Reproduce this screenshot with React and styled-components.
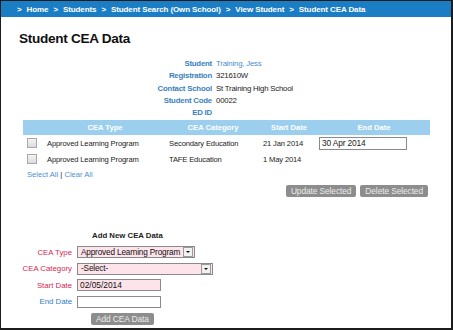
import React from "react";
import styled, { createGlobalStyle } from "styled-components";

const GlobalStyle = createGlobalStyle`
  html, body {
    margin: 0;
    padding: 0;
    background: #fff;
  }
  body {
    font-family: "Liberation Sans", Arial, sans-serif;
  }
`;

const crumbs = [
  "Home",
  "Students",
  "Student Search (Own School)",
  "View Student",
  "Student CEA Data",
];

const info = [
  { label: "Student", value: "Training, Jess", link: true },
  { label: "Registration", value: "321610W" },
  { label: "Contact School", value: "St Training High School" },
  { label: "Student Code", value: "00022" },
  { label: "ED ID", value: "" },
];

const rows = [
  {
    type: "Approved Learning Program",
    category: "Secondary Education",
    start: "21 Jan 2014",
    end: "30 Apr 2014",
  },
  {
    type: "Approved Learning Program",
    category: "TAFE Education",
    start: "1 May 2014",
  },
];

function App() {
  return (
    <>
      <GlobalStyle />
      <Frame>
        <Crumbs>
          {crumbs.map((c) => (
            <Crumb key={c}>
              <Gt>&gt;</Gt>
              {c}
            </Crumb>
          ))}
        </Crumbs>

        <Title>Student CEA Data</Title>

        <Info>
          {info.map((i) => (
            <React.Fragment key={i.label}>
              <InfoLabel>{i.label}</InfoLabel>
              <InfoValue $link={i.link}>{i.value}</InfoValue>
            </React.Fragment>
          ))}
        </Info>

        <Table>
          <Head />
          <Head>CEA Type</Head>
          <Head>CEA Category</Head>
          <Head>Start Date</Head>
          <Head>End Date</Head>
          {rows.map((r, idx) => (
            <React.Fragment key={idx}>
              <Cell>
                <Check />
              </Cell>
              <Cell>{r.type}</Cell>
              <Cell>{r.category}</Cell>
              <Cell>{r.start}</Cell>
              <Cell>{r.end && <DateBox>{r.end}</DateBox>}</Cell>
            </React.Fragment>
          ))}
        </Table>

        <SelectLinks>
          <Link>Select All</Link> | <Link>Clear All</Link>
        </SelectLinks>

        <Actions>
          <GreyButton>Update Selected</GreyButton>
          <GreyButton>Delete Selected</GreyButton>
        </Actions>

        <AddHeading>Add New CEA Data</AddHeading>

        <Form>
          <FormLabel $required>CEA Type</FormLabel>
          <Select $width={118}>
            <span>Approved Learning Program</span>
            <Arrow />
          </Select>

          <FormLabel $required>CEA Category</FormLabel>
          <Select $width={136}>
            <span>-Select-</span>
            <Arrow />
          </Select>

          <FormLabel $required>Start Date</FormLabel>
          <TextBox $pink>02/05/2014</TextBox>

          <FormLabel>End Date</FormLabel>
          <TextBox />
        </Form>

        <AddButton>Add CEA Data</AddButton>
      </Frame>
    </>
  );
}

export default App;

const Frame = styled.div`
  width: 453px;
  height: 330px;
  box-sizing: border-box;
  border: 1px solid #1c1c1c;
  border-right-width: 2px;
  border-bottom-width: 2px;
  overflow: hidden;
  display: flex;
  flex-direction: column;
`;

const Crumbs = styled.div`
  height: 16px;
  flex-shrink: 0;
  background-color: #1b7dc4;
  display: flex;
  align-items: center;
  padding-left: 16px;
  color: #fff;
  font-weight: bold;
  font-size: 8px;
  letter-spacing: -0.1px;
  white-space: nowrap;
`;

const Crumb = styled.span`
  margin-right: 5px;
`;

const Gt = styled.span`
  margin-right: 5px;
`;

const Title = styled.h1`
  margin: 15px 0 0 18px;
  font-size: 13.6px;
  line-height: 14px;
  font-weight: bold;
  color: #111;
  letter-spacing: -0.3px;
`;

const Info = styled.div`
  display: grid;
  grid-template-columns: 211px 1fr;
  column-gap: 4px;
  grid-auto-rows: 12.3px;
  margin-top: 12px;
  font-size: 7.8px;
  line-height: 12.3px;
`;

const InfoLabel = styled.div`
  text-align: right;
  color: #3a7fc1;
  font-weight: bold;
  letter-spacing: -0.2px;
`;

const InfoValue = styled.div`
  color: ${(p) => (p.$link ? "#4b8fcf" : "#222")};
  letter-spacing: -0.2px;
`;

const Table = styled.div`
  display: grid;
  grid-template-columns: 21px 122px 94px 58px 1fr;
  grid-template-rows: 15px 16px 16px;
  margin: 1px 21px 0 22px;
  font-size: 7.6px;
  color: #222;
`;

const Head = styled.div`
  background-color: #9ccfee;
  color: #fff;
  font-weight: bold;
  text-align: center;
  line-height: 15px;
`;

const Cell = styled.div`
  display: flex;
  align-items: center;
  padding-left: 3px;
  letter-spacing: -0.15px;
  white-space: nowrap;
`;

const Check = styled.span`
  width: 8px;
  height: 8px;
  margin-left: 1px;
  border: 1px solid #a9a9a9;
  background: linear-gradient(#f4f4f4, #dcdcdc);
`;

const DateBox = styled.div`
  width: 84px;
  height: 11px;
  border: 1px solid #8a8a8a;
  background: #fff;
  font-size: 8.4px;
  line-height: 11px;
  padding-left: 2px;
  box-sizing: content-box;
  margin-left: -2px;
`;

const SelectLinks = styled.div`
  margin-left: 26px;
  height: 16px;
  line-height: 16px;
  font-size: 7.6px;
  color: #222;
`;

const Link = styled.span`
  color: #4b8fcf;
`;

const Actions = styled.div`
  display: flex;
  justify-content: flex-end;
  gap: 4px;
  margin: 2px 23px 0 0;
`;

const GreyButton = styled.div`
  height: 12px;
  line-height: 12px;
  padding: 0 5px;
  background-color: #8d8d8d;
  border-radius: 2px;
  color: #ececec;
  font-size: 8.4px;
  letter-spacing: -0.1px;
  white-space: nowrap;
`;

const AddHeading = styled.div`
  margin: 34px 0 0 91px;
  font-size: 7.8px;
  font-weight: bold;
  color: #222;
  line-height: 10px;
`;

const Form = styled.div`
  display: grid;
  grid-template-columns: 71px auto;
  column-gap: 5px;
  row-gap: 4.5px;
  justify-content: start;
  align-items: center;
  margin-top: 5px;
`;

const FormLabel = styled.div`
  text-align: right;
  font-size: 7.8px;
  white-space: nowrap;
  color: ${(p) => (p.$required ? "#d62852" : "#2b7ec4")};
`;

const Select = styled.div`
  width: ${(p) => p.$width}px;
  height: 12px;
  box-sizing: border-box;
  border: 1px solid #8a8a8a;
  background-color: #fde3ea;
  display: flex;
  align-items: center;
  justify-content: space-between;
  padding-left: 3px;
  font-size: 8.2px;
  letter-spacing: -0.15px;
  white-space: nowrap;
  overflow: hidden;
  color: #111;
`;

const Arrow = styled.span`
  flex-shrink: 0;
  width: 8px;
  height: 8px;
  margin-right: 1px;
  border: 1px solid #9a9a9a;
  background: #f1f1f1;
  display: flex;
  align-items: center;
  justify-content: center;
  &::after {
    content: "";
    border-left: 2px solid transparent;
    border-right: 2px solid transparent;
    border-top: 2px solid #111;
  }
`;

const TextBox = styled.div`
  width: 84px;
  height: 12px;
  box-sizing: border-box;
  border: 1px solid #8a8a8a;
  background-color: ${(p) => (p.$pink ? "#fde3ea" : "#fff")};
  padding-left: 2px;
  font-size: 8.4px;
  line-height: 10px;
  color: #111;
`;

const AddButton = styled(GreyButton)`
  align-self: flex-start;
  margin: 5px 0 0 90px;
`;
